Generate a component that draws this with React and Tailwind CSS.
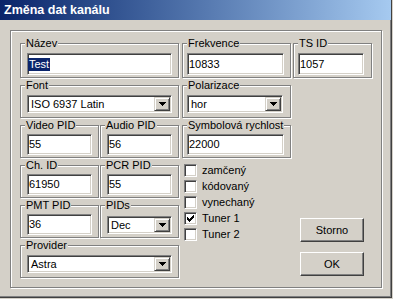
import React from 'react';

const sunken =
  'border border-t-[#808080] border-l-[#808080] border-b-white border-r-white shadow-[inset_1px_1px_0_#404040,inset_-1px_-1px_0_#d4d0c8] bg-white';
const etched = 'border border-[#808080] shadow-[inset_1px_1px_0_#fff,1px_1px_0_#fff]';

function Group({ label, className = '', children }) {
  return (
    <div className={`relative ${etched} ${className}`}>
      <span className="absolute left-[4px] top-[-7px] bg-[#d4d0c8] px-[1px] leading-[13px]">{label}</span>
      {children}
    </div>
  );
}

function Field({ value, className = 'h-[21px]', selected }) {
  return (
    <div className={`${sunken} ${className} flex items-center pl-[1px] leading-[13px]`}>
      {selected ? <span className="bg-[#0a246a] text-white px-[1px] -ml-[1px]">{value}</span> : value}
    </div>
  );
}

function Arrow() {
  return (
    <svg width="7" height="4" viewBox="0 0 7 4" shapeRendering="crispEdges">
      <rect x="0" y="0" width="7" height="1" fill="#000" />
      <rect x="1" y="1" width="5" height="1" fill="#000" />
      <rect x="2" y="2" width="3" height="1" fill="#000" />
      <rect x="3" y="3" width="1" height="1" fill="#000" />
    </svg>
  );
}

function Select({ value }) {
  return (
    <div className={`${sunken} h-[18px] flex items-center pl-[3px] pr-[1px] leading-[13px]`}>
      <span className="flex-1">{value}</span>
      <div className="w-[16px] h-[14px] flex items-center justify-center bg-[#d4d0c8] border border-t-[#d4d0c8] border-l-[#d4d0c8] border-b-[#404040] border-r-[#404040] shadow-[inset_1px_1px_0_#fff,inset_-1px_-1px_0_#808080]">
        <Arrow />
      </div>
    </div>
  );
}

const checkPx = [
  [6, 0, 1], [5, 1, 2], [0, 2, 1], [4, 2, 3], [0, 3, 2], [3, 3, 3], [0, 4, 5], [1, 5, 3], [2, 6, 1],
];

function Check({ label, checked }) {
  return (
    <div className="flex items-start h-[16px]">
      <div className={`${sunken} w-[13px] h-[13px] shrink-0`}>
        {checked && (
          <svg width="11" height="11" viewBox="0 0 11 11" shapeRendering="crispEdges" className="block">
            {checkPx.map(([x, y, w], i) => (
              <rect key={i} x={x + 2} y={y + 2} width={w} height="1" fill="#000" />
            ))}
          </svg>
        )}
      </div>
      <span className="ml-[5px] leading-[13px]">{label}</span>
    </div>
  );
}

function Button({ children }) {
  return (
    <div className="w-[64px] h-[24px] flex items-center justify-center border border-t-white border-l-white border-b-[#404040] border-r-[#404040] shadow-[inset_-1px_-1px_0_#808080]">
      {children}
    </div>
  );
}

export default function App() {
  return (
    <div className="w-[393px] h-[299px] bg-[#d4d0c8] font-['Liberation_Sans',Arial,sans-serif] text-[11px] text-black">
      <div className="w-[392px] h-[298px] border-r border-b border-[#404040] shadow-[inset_-1px_-1px_0_#808080] flex flex-col">
        <div className="h-[20px] bg-linear-to-r from-[#0a246a] to-[#a6caf0] flex items-center pl-[4px] text-white font-bold text-[12.5px]">
          Změna dat kanálu
        </div>
        <div className={`ml-[10px] mt-[10px] w-[372px] h-[258px] ${etched} pl-[9px] pt-[12px] flex gap-[3px]`}>
          {/* left column */}
          <div className="w-[159px] flex flex-col gap-[7px]">
            <Group label="Název" className="h-[35px] px-[6px] pt-[9px]">
              <Field value="Test" selected className="h-[22px]" />
            </Group>
            <Group label="Font" className="h-[33px] px-[6px] pt-[9px]">
              <Select value="ISO 6937 Latin" />
            </Group>
            <div className="flex gap-[1px]">
              <Group label="Video PID" className="w-[79px] h-[33px] px-[6px] pt-[8px]">
                <Field value="55" />
              </Group>
              <Group label="Audio PID" className="w-[79px] h-[33px] px-[6px] pt-[8px]">
                <Field value="56" />
              </Group>
            </div>
            <div className="flex gap-[1px]">
              <Group label="Ch. ID" className="w-[79px] h-[33px] px-[6px] pt-[8px]">
                <Field value="61950" />
              </Group>
              <Group label="PCR PID" className="w-[79px] h-[33px] px-[6px] pt-[8px]">
                <Field value="55" />
              </Group>
            </div>
            <div className="flex gap-[1px]">
              <Group label="PMT PID" className="w-[79px] h-[33px] px-[6px] pt-[8px]">
                <Field value="36" />
              </Group>
              <Group label="PIDs" className="w-[79px] h-[33px] px-[6px] pt-[10px]">
                <Select value="Dec" />
              </Group>
            </div>
            <Group label="Provider" className="h-[33px] px-[6px] pt-[9px]">
              <Select value="Astra" />
            </Group>
          </div>

          {/* right column */}
          <div className="w-[190px] flex flex-col">
            <div className="flex gap-[2px]">
              <Group label="Frekvence" className="w-[109px] h-[35px] pl-[4px] pr-[6px] pt-[9px]">
                <Field value="10833" className="h-[22px]" />
              </Group>
              <Group label="TS ID" className="w-[79px] h-[35px] pl-[4px] pr-[7px] pt-[9px]">
                <Field value="1057" className="h-[22px]" />
              </Group>
            </div>
            <Group label="Polarizace" className="mt-[7px] w-[109px] h-[33px] pl-[4px] pr-[7px] pt-[9px]">
              <Select value="hor" />
            </Group>
            <Group label="Symbolová rychlost" className="mt-[7px] w-[109px] h-[33px] pl-[4px] pr-[6px] pt-[8px]">
              <Field value="22000" />
            </Group>
            <div className="flex mt-[6px]">
              <div className="w-[116px] ml-[2px] flex flex-col">
                <Check label="zamčený" />
                <Check label="kódovaný" />
                <Check label="vynechaný" />
                <Check label="Tuner 1" checked />
                <Check label="Tuner 2" />
              </div>
              <div className="flex flex-col gap-[10px] mt-[54px]">
                <Button>Storno</Button>
                <Button>OK</Button>
              </div>
            </div>
          </div>
        </div>
      </div>
    </div>
  );
}
